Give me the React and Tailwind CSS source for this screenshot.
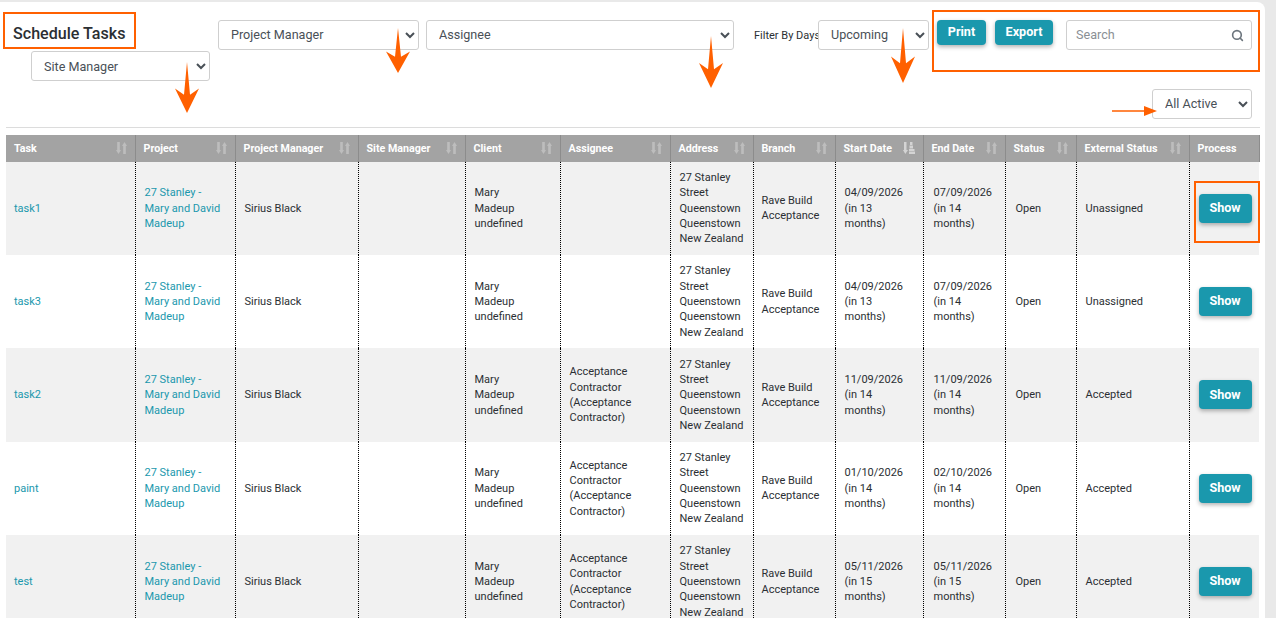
import { Search } from "lucide-react";

const columnas = [
  { titulo: "Task", ancho: "w-[129px]" },
  { titulo: "Project", ancho: "w-[100px]" },
  { titulo: "Project Manager", ancho: "w-[123px]" },
  { titulo: "Site Manager", ancho: "w-[107px]" },
  { titulo: "Client", ancho: "w-[95px]" },
  { titulo: "Assignee", ancho: "w-[110px]" },
  { titulo: "Address", ancho: "w-[83px]" },
  { titulo: "Branch", ancho: "w-[82px]" },
  { titulo: "Start Date", ancho: "w-[88px]", activa: true },
  { titulo: "End Date", ancho: "w-[82px]" },
  { titulo: "Status", ancho: "w-[71px]" },
  { titulo: "External Status", ancho: "w-[113px]" },
  { titulo: "Process", ancho: "w-[70px]", sinOrden: true },
];

const contratista = "Acceptance Contractor (Acceptance Contractor)";

const tareas = [
  { nombre: "task1", inicio: "04/09/2026", inicioEn: "(in 13 months)", fin: "07/09/2026", finEn: "(in 14 months)", asignado: "", externo: "Unassigned" },
  { nombre: "task3", inicio: "04/09/2026", inicioEn: "(in 13 months)", fin: "07/09/2026", finEn: "(in 14 months)", asignado: "", externo: "Unassigned" },
  { nombre: "task2", inicio: "11/09/2026", inicioEn: "(in 14 months)", fin: "11/09/2026", finEn: "(in 14 months)", asignado: contratista, externo: "Accepted" },
  { nombre: "paint", inicio: "01/10/2026", inicioEn: "(in 14 months)", fin: "02/10/2026", finEn: "(in 14 months)", asignado: contratista, externo: "Accepted" },
  { nombre: "test", inicio: "05/11/2026", inicioEn: "(in 15 months)", fin: "05/11/2026", finEn: "(in 15 months)", asignado: contratista, externo: "Accepted" },
];

function IconoOrden({ activa }) {
  if (activa) {
    return (
      <svg width="12" height="12" viewBox="0 0 12 12" className="shrink-0 text-[#d4d4d4]" fill="currentColor">
        <path d="M1 0h2.5v8H5l-2.7 4L0 8h1z" />
        <path d="M7 0h2.5v3H7zM6.5 3.5H10v3H6.5zM6 7h5.5v2H6zM6 9.5h6V12H6z" />
      </svg>
    );
  }
  return (
    <svg width="11" height="12" viewBox="0 0 11 12" className="shrink-0 text-[#bdbdbd]" fill="currentColor">
      <path d="M1.2 0h2.6v8H5l-2.5 4L0 8h1.2z" />
      <path d="M7.2 12h2.6V4H11L8.5 0 6 4h1.2z" />
    </svg>
  );
}

function FlechaAbajo({ className }) {
  return (
    <svg viewBox="0 0 24 50" preserveAspectRatio="none" className={`absolute w-[24px] ${className}`} fill="#ff6000">
      <path d="M12 0 L15 32 L24 26 L12 50 L0 26 L9 32 Z" />
    </svg>
  );
}

function Selector({ className, children }) {
  return (
    <select className={`h-[30px] rounded-[3px] border border-[#cfcfcf] bg-white pl-2 text-[12.6px] text-[#495057] ${className}`}>
      {children}
    </select>
  );
}

function BotonTeal({ className, children }) {
  return (
    <button
      type="button"
      className={`rounded-[4px] bg-[#1a98ad] pb-[1px] text-[12.6px] font-bold text-white shadow-[0_2px_4px_rgba(0,0,0,0.3)] ${className}`}
    >
      {children}
    </button>
  );
}

export default function App() {
  return (
    <div className="h-[618px] w-[1276px] overflow-hidden bg-[#e9e9e9] pt-[2px] font-['Roboto',sans-serif] text-[11px] leading-[15.35px] text-[#2b2f33]">
      <div className="relative h-[616px] w-[1265px] rounded-tr-[8px] bg-white pl-[6px] pr-[5px]">
        <div className="flex">
          <div className="w-[212px] shrink-0">
            <h1 className="pl-[7px] pt-[22px] text-[16.1px] font-medium leading-5 text-[#2b2f33]">Schedule Tasks</h1>
            <Selector className="ml-[25px] mt-[7px] w-[179px]">
              <option>Site Manager</option>
            </Selector>
          </div>
          <div className="flex flex-1 items-start pt-[18px]">
            <Selector className="w-[201px] pb-[1px]">
              <option>Project Manager</option>
            </Selector>
            <Selector className="ml-[7px] w-[308px] pb-[1px]">
              <option>Assignee</option>
            </Selector>
            <span className="ml-5 w-[64px] whitespace-nowrap pt-[8px] text-[11px] text-[#2b2f33]">Filter By Days</span>
            <Selector className="w-[111px] pb-[1px]">
              <option>Upcoming</option>
            </Selector>
            <BotonTeal className="ml-2 h-[25px] w-[49px]">Print</BotonTeal>
            <BotonTeal className="ml-[9px] h-[25px] w-[58px]">Export</BotonTeal>
            <div className="ml-[13px] flex h-[30px] w-[186px] items-center justify-between rounded-[3px] border border-[#cfcfcf] pl-[9px] pr-[7px] text-[12.6px] text-[#8a8f94]">
              <span>Search</span>
              <Search size={13} strokeWidth={3} className="text-[#6c757d]" />
            </div>
          </div>
        </div>
        <div className="flex justify-end pr-2 pt-2">
          <Selector className="w-[100px] pb-[1px]">
            <option>All Active</option>
          </Selector>
        </div>
        <hr className="mt-2 border-[#dcdcdc]" />

        <table className="mt-[7px] w-[1253px] table-fixed border-collapse">
          <thead>
            <tr className="h-[26.7px] bg-[#a3a3a3] text-left text-[10.7px] font-bold text-white">
              {columnas.map((col) => (
                <th key={col.titulo} className={`${col.ancho} border-r border-[#8c8c8c] px-2`}>
                  <div className="flex items-center justify-between">
                    <span className="whitespace-nowrap">{col.titulo}</span>
                    {!col.sinOrden && <IconoOrden activa={col.activa} />}
                  </div>
                </th>
              ))}
            </tr>
          </thead>
          <tbody>
            {tareas.map((tarea) => (
              <tr key={tarea.nombre} className="h-[93.3px] odd:bg-[#f1f1f1]">
                <td className="border-r border-dotted border-black px-2 text-[#1a98ad]">{tarea.nombre}</td>
                <td className="border-r border-dotted border-black pl-[9px] pr-2 text-[#1a98ad]">27 Stanley - Mary and David Madeup</td>
                <td className="border-r border-dotted border-black pl-[9px] pr-2">Sirius Black</td>
                <td className="border-r border-dotted border-black px-2"></td>
                <td className="border-r border-dotted border-black pl-[9px] pr-5">Mary Madeup undefined</td>
                <td className="border-r border-dotted border-black pl-[9px] pr-2">{tarea.asignado}</td>
                <td className="border-r border-dotted border-black pl-[9px] pr-1">27 Stanley Street Queenstown Queenstown New Zealand</td>
                <td className="border-r border-dotted border-black px-2">Rave Build Acceptance</td>
                <td className="border-r border-dotted border-black pl-[9px] pr-2">
                  {tarea.inicio}
                  <br />
                  {tarea.inicioEn}
                </td>
                <td className="border-r border-dotted border-black pl-[10px] pr-2">
                  {tarea.fin}
                  <br />
                  {tarea.finEn}
                </td>
                <td className="border-r border-dotted border-black pl-[10px] pr-2">Open</td>
                <td className="border-r border-dotted border-black pl-[9px] pr-2">{tarea.externo}</td>
                <td className="pl-[9px] pr-2">
                  <BotonTeal className="h-[29px] w-[53px]">Show</BotonTeal>
                </td>
              </tr>
            ))}
          </tbody>
        </table>

        {/* anotaciones naranjas encima de la captura */}
        <div className="pointer-events-none absolute left-[3px] top-[10px] h-[37px] w-[133px] border-2 border-[#ff6000]" />
        <div className="pointer-events-none absolute left-[932px] top-[8px] h-[62px] w-[328px] border-2 border-[#ff6000]" />
        <div className="pointer-events-none absolute left-[1194px] top-[179px] h-[62px] w-[66px] border-2 border-[#ff6000]" />
        <FlechaAbajo className="left-[175px] top-[60px] h-[51px]" />
        <FlechaAbajo className="left-[386px] top-[26px] h-[45px]" />
        <FlechaAbajo className="left-[699px] top-[34px] h-[52px]" />
        <FlechaAbajo className="left-[891px] top-[26px] h-[55px]" />
        <svg width="45" height="10" viewBox="0 0 45 10" className="absolute left-[1112px] top-[104px]" fill="#ff6000">
          <path d="M0 4.2h32V0l13 5-13 5V5.8H0z" />
        </svg>
      </div>
    </div>
  );
}
